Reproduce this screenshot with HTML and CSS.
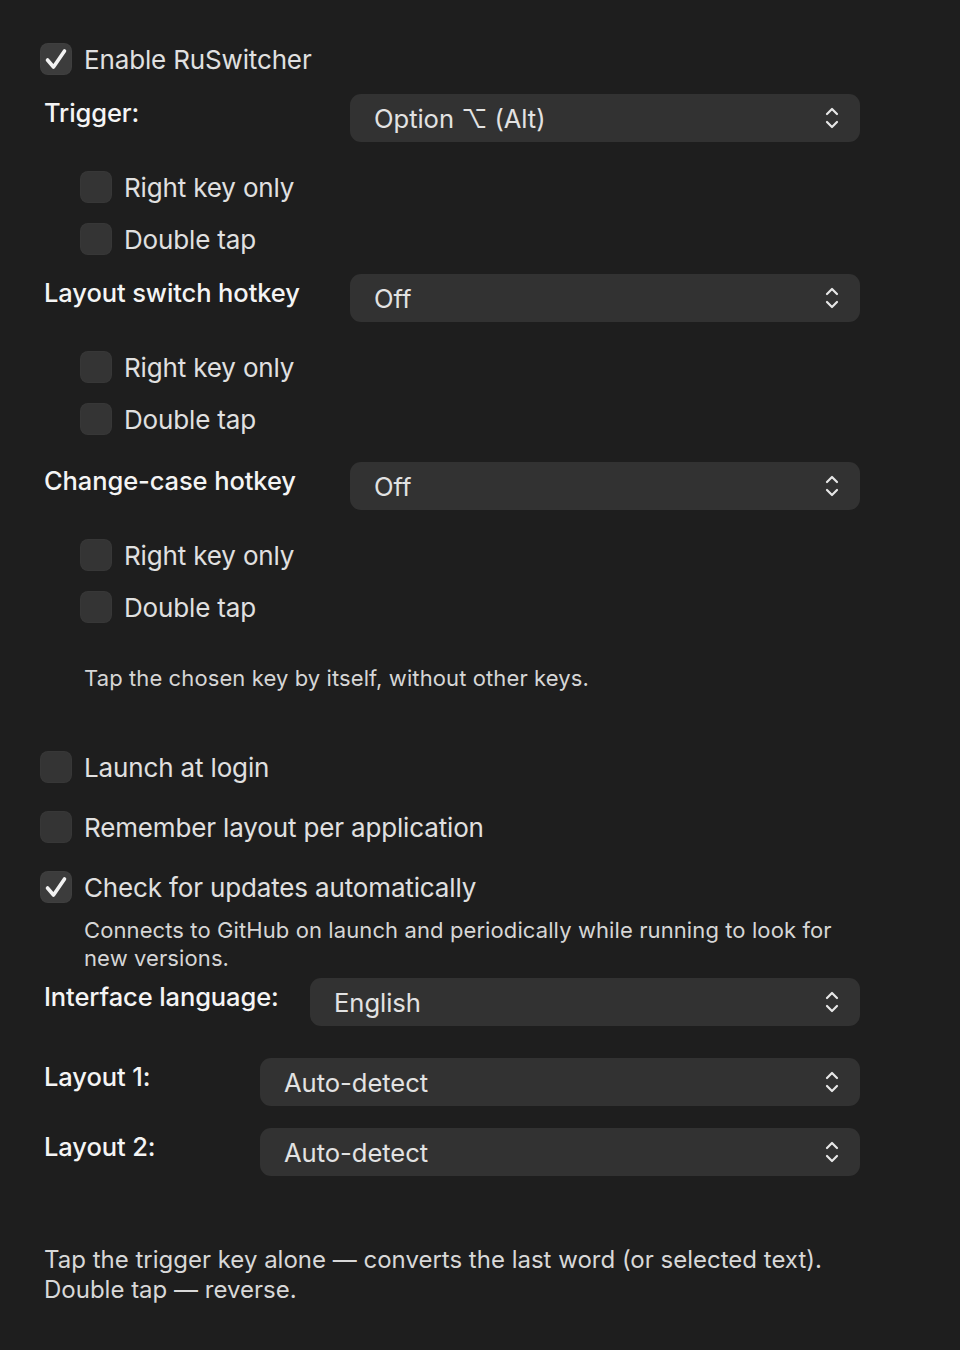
FILE: index.html
```html
<!DOCTYPE html>
<html lang="en">
<head>
<meta charset="utf-8">
<title>RuSwitcher Settings</title>
<link rel="stylesheet" href="styles.css">
</head>
<body>
<div class="panel">

  <div class="check-row top-check first">
    <span class="box checked"><svg viewBox="0 0 32 32"><path d="M7.5 17 L13.5 24 L24.5 8" /></svg></span>
    <span class="check-label">Enable RuSwitcher</span>
  </div>

  <div class="field-row trigger-row">
    <span class="field-label">Trigger:</span>
    <div class="popup w510"><span class="popup-text">Option ⌥ (Alt)</span><svg class="chev" viewBox="0 0 14 24"><path d="M2 8 L7 3 L12 8 M2 16 L7 21 L12 16"/></svg></div>
  </div>
  <div class="sub-group g1">
    <div class="check-row sub"><span class="box"></span><span class="check-label">Right key only</span></div>
    <div class="check-row sub"><span class="box"></span><span class="check-label">Double tap</span></div>
  </div>

  <div class="field-row">
    <span class="field-label">Layout switch hotkey</span>
    <div class="popup w510"><span class="popup-text">Off</span><svg class="chev" viewBox="0 0 14 24"><path d="M2 8 L7 3 L12 8 M2 16 L7 21 L12 16"/></svg></div>
  </div>
  <div class="sub-group g2">
    <div class="check-row sub"><span class="box"></span><span class="check-label">Right key only</span></div>
    <div class="check-row sub"><span class="box"></span><span class="check-label">Double tap</span></div>
  </div>

  <div class="field-row">
    <span class="field-label">Change-case hotkey</span>
    <div class="popup w510"><span class="popup-text">Off</span><svg class="chev" viewBox="0 0 14 24"><path d="M2 8 L7 3 L12 8 M2 16 L7 21 L12 16"/></svg></div>
  </div>
  <div class="sub-group g3">
    <div class="check-row sub"><span class="box"></span><span class="check-label">Right key only</span></div>
    <div class="check-row sub"><span class="box"></span><span class="check-label">Double tap</span></div>
  </div>

  <p class="note tap-note">Tap the chosen key by itself, without other keys.</p>

  <div class="options">
    <div class="check-row top-check"><span class="box"></span><span class="check-label">Launch at login</span></div>
    <div class="check-row top-check"><span class="box"></span><span class="check-label">Remember layout per application</span></div>
    <div class="check-row top-check">
      <span class="box checked"><svg viewBox="0 0 32 32"><path d="M7.5 17 L13.5 24 L24.5 8" /></svg></span>
      <span class="check-label">Check for updates automatically</span>
    </div>
  </div>
  <p class="note updates-note">Connects to GitHub on launch and periodically while running to look for new versions.</p>

  <div class="field-row lang-row">
    <span class="field-label">Interface language:</span>
    <div class="popup w550"><span class="popup-text">English</span><svg class="chev" viewBox="0 0 14 24"><path d="M2 8 L7 3 L12 8 M2 16 L7 21 L12 16"/></svg></div>
  </div>

  <div class="field-row layout1-row">
    <span class="field-label">Layout 1:</span>
    <div class="popup w600"><span class="popup-text">Auto-detect</span><svg class="chev" viewBox="0 0 14 24"><path d="M2 8 L7 3 L12 8 M2 16 L7 21 L12 16"/></svg></div>
  </div>

  <div class="field-row layout2-row">
    <span class="field-label">Layout 2:</span>
    <div class="popup w600"><span class="popup-text">Auto-detect</span><svg class="chev" viewBox="0 0 14 24"><path d="M2 8 L7 3 L12 8 M2 16 L7 21 L12 16"/></svg></div>
  </div>

  <p class="footer-note">Tap the trigger key alone — converts the last word (or selected text).<br>Double tap — reverse.</p>

</div>
</body>
</html>
```

FILE: styles.css
```css
html, body {
  margin: 0;
  padding: 0;
  background: #1e1e1e;
}

body {
  font-family: Inter, "Noto Sans", "Liberation Sans", sans-serif;
  color: #dedede;
  width: 960px;
  height: 1350px;
}

.panel {
  padding: 40px 0 0 40px;
  width: 820px;
}

.check-row {
  display: flex;
  align-items: center;
  height: 38px;
}

.check-row.sub {
  height: 52px;
  margin-left: 40px;
}

.box {
  width: 32px;
  height: 32px;
  border-radius: 8px;
  background: #343434;
  flex: none;
  display: flex;
  align-items: center;
  justify-content: center;
  box-shadow: inset 0 0 0 1px rgba(255,255,255,0.02);
}

.box.checked {
  background: #3c3c3c;
}

.box svg {
  width: 32px;
  height: 32px;
}

.box svg path {
  fill: none;
  stroke: #f2f2f2;
  stroke-width: 3.6;
  stroke-linecap: round;
  stroke-linejoin: round;
}

.check-label {
  margin-left: 12px;
  font-size: 26px;
  letter-spacing: -0.15px;
  color: #e0e0e0;
}

.field-row {
  display: flex;
  align-items: flex-start;
  margin-left: 4px;
  width: 816px;
}

.trigger-row {
  margin-top: 16px;
}

.field-label {
  line-height: 38px;
  font-size: 25.5px;
  font-weight: 500;
  color: #f4f4f4;
  letter-spacing: -0.1px;
}

.popup {
  margin-left: auto;
  height: 48px;
  border-radius: 11px;
  background: #323232;
  display: flex;
  align-items: center;
  padding: 0 20px 0 24px;
  box-sizing: border-box;
}

.w510 { width: 510px; }
.w550 { width: 550px; }
.w600 { width: 600px; }

.popup-text {
  font-size: 25.6px;
  color: #e2e2e2;
  flex: 1;
  letter-spacing: -0.05px;
}

.chev {
  width: 14px;
  height: 24px;
  margin-right: 1px;
}

.chev path {
  fill: none;
  stroke: #e6e6e6;
  stroke-width: 2.2;
  stroke-linecap: round;
  stroke-linejoin: round;
}

.sub-group {
  padding-top: 19px;
}

.g1 { margin-bottom: 9px; }
.g2 { margin-bottom: 17px; }
.g3 { margin-bottom: 0; }

.note {
  margin: 0;
  margin-left: 44px;
  font-size: 22px;
  line-height: 28px;
  letter-spacing: 0.1px;
  color: #d6d6d6;
}

.tap-note {
  margin-top: 31px;
}

.options {
  margin-top: 56px;
  display: flex;
  flex-direction: column;
  gap: 22px;
}

.updates-note {
  margin-top: 10px;
  width: 760px;
}

.lang-row {
  margin-top: 6px;
}

.layout1-row {
  margin-top: 32px;
}

.layout2-row {
  margin-top: 22px;
}

.footer-note {
  margin: 69px 0 0 4px;
  font-size: 24px;
  line-height: 30px;
  color: #d8d8d8;
}
```
